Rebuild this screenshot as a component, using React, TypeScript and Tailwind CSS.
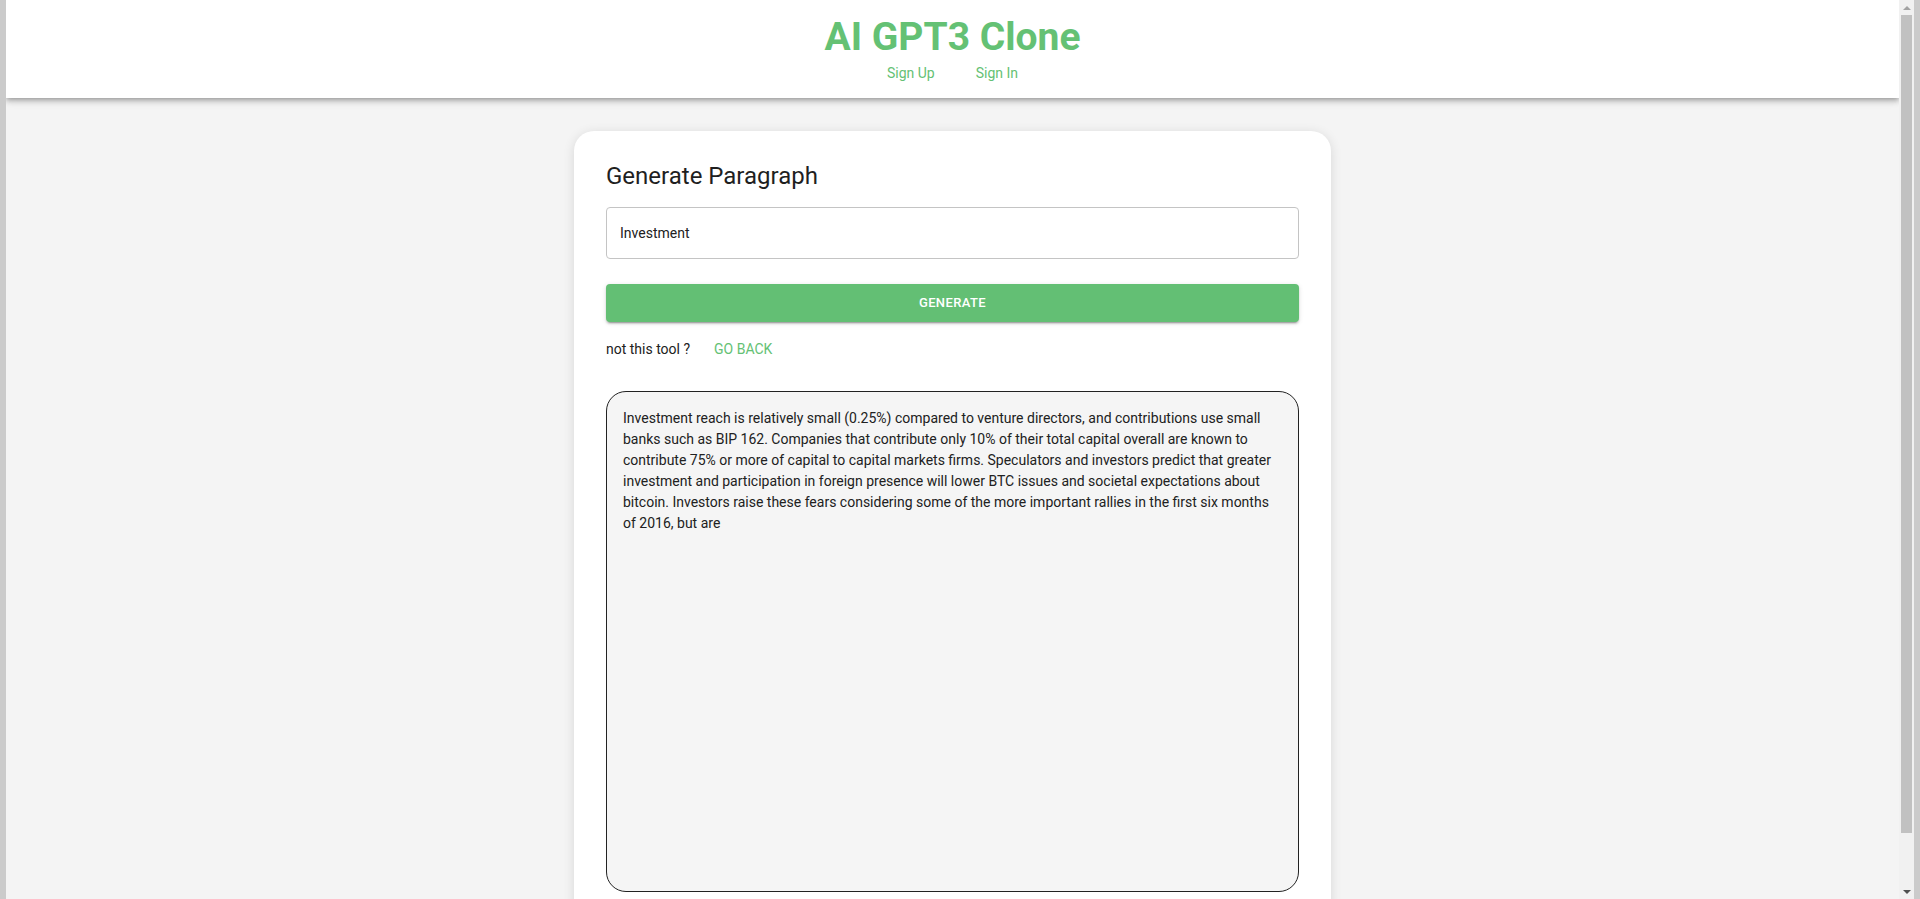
import React from "react";

const paragraph =
  "Investment reach is relatively small (0.25%) compared to venture directors, and contributions use small banks such as BIP 162. Companies that contribute only 10% of their total capital overall are known to contribute 75% or more of capital to capital markets firms. Speculators and investors predict that greater investment and participation in foreign presence will lower BTC issues and societal expectations about bitcoin. Investors raise these fears considering some of the more important rallies in the first six months of 2016, but are";

export default function App() {
  return (
    <div
      className="flex h-[899px] w-full overflow-hidden bg-[#cbcbcb]"
      style={{ fontFamily: "Roboto, 'Liberation Sans', sans-serif" }}
    >
      <div className="w-[6px] shrink-0 bg-[#cbcbcb]" />
      <div className="relative flex-1 overflow-hidden bg-[#f4f4f4]">
        <header className="relative z-10 flex h-[98px] flex-col items-center bg-white shadow-[0_2px_4px_-1px_rgba(0,0,0,0.2),0_4px_5px_0_rgba(0,0,0,0.14),0_1px_10px_0_rgba(0,0,0,0.12)]">
          <h1 className="mt-[13px] text-[39px] font-bold leading-[48px] text-[#64c174]">
            AI GPT3 Clone
          </h1>
          <nav className="mt-[2px] flex gap-[41px] text-[14px] leading-5 text-[#64c174]">
            <span>Sign Up</span>
            <span>Sign In</span>
          </nav>
        </header>
        <main className="flex justify-center pt-[33px]">
          <div className="w-[757px] rounded-[20px] bg-white px-8 pt-[29px] pb-8 shadow-[0_2px_12px_rgba(0,0,0,0.12)]">
            <h2 className="text-[24px] leading-8 text-[#1f1f1f]">Generate Paragraph</h2>
            <div className="mt-[15px] flex h-[52px] items-center rounded-[4px] border border-[#c4c4c4] px-[13px] text-[14px] text-[#212121]">
              Investment
            </div>
            <button className="mt-[25px] flex h-[38px] w-full items-center justify-center rounded-[4px] bg-[#63bf74] text-[13px] font-medium tracking-[0.4px] text-white shadow-[0_3px_1px_-2px_rgba(0,0,0,0.2),0_2px_2px_0_rgba(0,0,0,0.14),0_1px_5px_0_rgba(0,0,0,0.12)]">
              GENERATE
            </button>
            <div className="mt-[17px] flex items-center gap-[24px] text-[14px] leading-5">
              <span className="text-[#212121]">not this tool ?</span>
              <span className="text-[#64c174]">GO BACK</span>
            </div>
            <div className="mt-[32px] h-[501px] rounded-[20px] border border-[#222] bg-[#f5f5f5] px-4 pt-[16px] text-[14px] leading-[21px] text-[#212121]">
              {paragraph}
            </div>
          </div>
        </main>
      </div>
      <div className="relative flex w-[15px] shrink-0 flex-col items-center bg-[#f1f1f1]">
        <div className="mt-[6px] h-0 w-0 border-x-[4px] border-b-[4px] border-x-transparent border-b-[#a3a3a3]" />
        <div className="mt-[5px] h-[818px] w-[11px] bg-[#c1c1c1]" />
        <div className="mt-[57px] h-0 w-0 border-x-[4px] border-t-[4px] border-x-transparent border-t-[#505050]" />
      </div>
      <div className="w-[6px] shrink-0 bg-[#cbcbcb]" />
    </div>
  );
}
